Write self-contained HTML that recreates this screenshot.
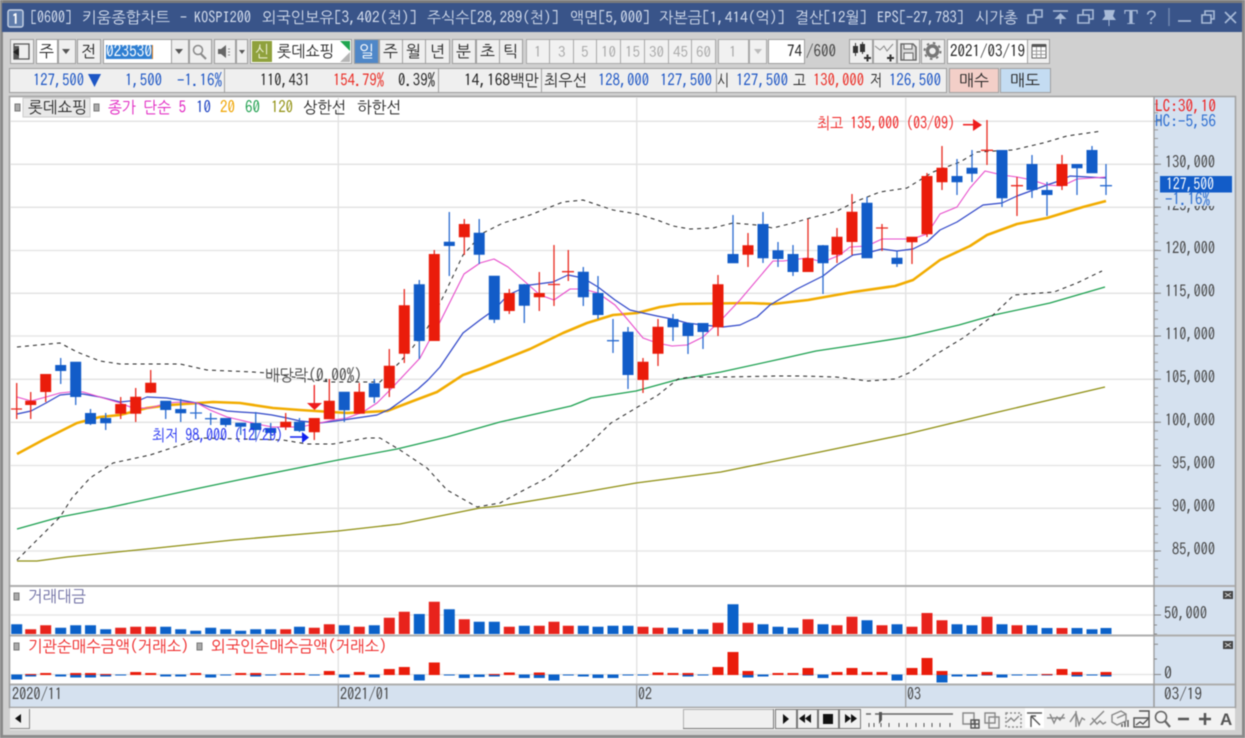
<!DOCTYPE html>
<html lang="ko"><head><meta charset="utf-8"><title>키움종합차트</title>
<style>
html,body{margin:0;padding:0;background:#d0d0d0;width:1245px;height:738px;overflow:hidden}
svg{display:block;filter:blur(.45px)}
text{font-family:"IPAGothic","NanumGothic","Noto Sans CJK KR",sans-serif;font-size:16px;fill:#222}
.b{fill:#efefef;stroke:#9e9e9e}
.w{fill:#fff;stroke:#9e9e9e}
.i{fill:#f1f1f1;stroke:#a8a8a8}
.d{fill:#aaa;font-size:15px}
.u{fill:#1c55c4}.r{fill:#ea2a22}
.ti{fill:#d5deee;font-size:15.5px}
.ax{fill:#444}
.n{fill:none}
</style></head><body>
<svg width="1245" height="738" viewBox="0 0 1245 738" xmlns="http://www.w3.org/2000/svg">
<rect width="1245" height="738" fill="#d0d0d0"/>
<!-- window edges -->
<rect width="1245" height="3" fill="#7c7c7c"/>
<rect y="735" width="1245" height="3" fill="#8c8c8c"/>
<rect width="3" height="738" fill="#8a8a8a"/>
<rect x="1242" width="3" height="738" fill="#8a8a8a"/>
<!-- title bar -->
<rect x="2" y="3" width="1240" height="29" fill="#395489"/>
<rect x="8" y="10" width="15" height="17" rx="2" fill="#5f7cab" stroke="#c9d4e6" stroke-width="1.4"/>
<text x="12" y="24" style="fill:#fff;font-size:14px;font-weight:bold">1</text>
<text class="ti" x="30" y="23" textLength="42" lengthAdjust="spacingAndGlyphs">[0600]</text>
<text class="ti" x="82" y="23" textLength="88" lengthAdjust="spacingAndGlyphs">키움종합차트</text>
<text class="ti" x="180" y="23" textLength="7" lengthAdjust="spacingAndGlyphs">-</text>
<text class="ti" x="194" y="23" textLength="57" lengthAdjust="spacingAndGlyphs">KOSPI200</text>
<text class="ti" x="262" y="23" textLength="155" lengthAdjust="spacingAndGlyphs">외국인보유[3,402(천)]</text>
<text class="ti" x="427" y="23" textLength="132" lengthAdjust="spacingAndGlyphs">주식수[28,289(천)]</text>
<text class="ti" x="570" y="23" textLength="80" lengthAdjust="spacingAndGlyphs">액면[5,000]</text>
<text class="ti" x="659" y="23" textLength="126" lengthAdjust="spacingAndGlyphs">자본금[1,414(억)]</text>
<text class="ti" x="795" y="23" textLength="72" lengthAdjust="spacingAndGlyphs">결산[12월]</text>
<text class="ti" x="877" y="23" textLength="87" lengthAdjust="spacingAndGlyphs">EPS[-27,783]</text>
<text class="ti" x="975" y="23" textLength="43" lengthAdjust="spacingAndGlyphs">시가총</text>
<g fill="none" stroke="#a9bbd8" stroke-width="1.6">
<path d="M1028 15h8v8h-8zM1034 15v-5h8v7h-6"/>
<path d="M1053 11h15M1060.500 24v-8"/>
<path fill="#a9bbd8" stroke="none" d="M1060.500 13l6 6h-12z"/>
<path d="M1078 15h11v8h-11zM1083 15v-5h10v9h-4"/>
<path fill="#a9bbd8" stroke="none" d="M1104 10h11l-2 6 3 4h-6.500v6h-1v-6h-6.500l3-4z"/>
<path d="M1178 21h13"/>
<path d="M1202 15h9v8h-9zM1205 15v-4h9v8h-3"/>
<path d="M1225 12l11 11M1236 12l-11 11"/>
<path stroke="#6f86ad" d="M1169 8v18"/>
</g>
<text x="1124" y="24" style="fill:#a9bbd8;font-family:'Liberation Serif',serif;font-size:21px;font-weight:bold">T</text>
<text x="1146" y="24" style="fill:#a9bbd8;font-family:'Liberation Sans',sans-serif;font-size:19px">?</text>

<!-- toolbar -->
<rect class="b" x="10.500" y="39.500" width="23" height="24"/>
<path d="M14 44h15v15h-15z" fill="none" stroke="#555" stroke-width="1.300"/><path d="M14 46h5v13h-5z" fill="#555"/><path d="M13 52l6-4v8z" fill="#222"/>
<rect class="w" x="36.500" y="39.500" width="21" height="24"/><text x="39" y="57" textLength="15" lengthAdjust="spacingAndGlyphs">주</text>
<rect class="b" x="58.500" y="39.500" width="17" height="24"/><path d="M62 49h8l-4 5z" fill="#555"/>
<rect class="b" x="77.500" y="39.500" width="23" height="24"/><text x="81" y="57" textLength="15" lengthAdjust="spacingAndGlyphs">전</text>
<rect class="w" x="103.500" y="39.500" width="68" height="24"/>
<rect x="106" y="45" width="46" height="14" fill="#2f7fd2"/><rect x="152" y="45" width="1" height="14" fill="#e08020"/>
<text x="106" y="57" textLength="46" lengthAdjust="spacingAndGlyphs" style="fill:#fff">023530</text>
<rect class="b" x="171.500" y="39.500" width="17" height="24"/><path d="M175 49h8l-4 5z" fill="#555"/>
<rect class="b" x="189.500" y="39.500" width="22" height="24"/><circle cx="198" cy="50" r="4.500" fill="none" stroke="#888" stroke-width="1.500"/><path d="M201 54l5 5" stroke="#888" stroke-width="2"/>
<rect class="b" x="214.500" y="39.500" width="21" height="24"/><path d="M218 49h3l5-4v13l-5-4h-3z" fill="#666"/><path d="M228 49h2M228 52h2M228 55h2" stroke="#888"/>
<rect class="b" x="236.500" y="39.500" width="11" height="24"/><path d="M239 50h6l-3 4z" fill="#555"/>
<rect class="w" x="250.500" y="39.500" width="101" height="24"/>
<rect x="252" y="41" width="20" height="21" fill="#8fa13c"/><text x="255" y="57" textLength="14" lengthAdjust="spacingAndGlyphs" style="fill:#eef2d8">신</text>
<text x="277" y="57" textLength="57" lengthAdjust="spacingAndGlyphs">롯데쇼핑</text>
<path d="M340 41h10v10z" fill="#1fa54f"/><path d="M350 52v10h-10z" fill="#b5b5b5"/>
<rect x="354.500" y="39.500" width="24" height="24" fill="#4f87c8" stroke="#9e9e9e"/><text x="359" y="57" textLength="15" lengthAdjust="spacingAndGlyphs" style="fill:#fff">일</text>
<rect class="b" x="379.500" y="39.500" width="23" height="24"/><text x="383" y="57" textLength="15" lengthAdjust="spacingAndGlyphs">주</text>
<rect class="b" x="402.500" y="39.500" width="23" height="24"/><text x="406" y="57" textLength="15" lengthAdjust="spacingAndGlyphs">월</text>
<rect class="b" x="425.500" y="39.500" width="24" height="24"/><text x="430" y="57" textLength="15" lengthAdjust="spacingAndGlyphs">년</text>
<rect class="b" x="452.500" y="39.500" width="23" height="24"/><text x="456" y="57" textLength="15" lengthAdjust="spacingAndGlyphs">분</text>
<rect class="b" x="476.500" y="39.500" width="23" height="24"/><text x="480" y="57" textLength="15" lengthAdjust="spacingAndGlyphs">초</text>
<rect class="b" x="499.500" y="39.500" width="23" height="24"/><text x="503" y="57" textLength="15" lengthAdjust="spacingAndGlyphs">틱</text>
<rect class="i" x="526.500" y="39.500" width="23" height="24"/><text class="d" x="534" y="57">1</text>
<rect class="i" x="549.500" y="39.500" width="24" height="24"/><text class="d" x="558" y="57">3</text>
<rect class="i" x="573.500" y="39.500" width="23" height="24"/><text class="d" x="581" y="57">5</text>
<rect class="i" x="596.500" y="39.500" width="24" height="24"/><text class="d" x="601" y="57">10</text>
<rect class="i" x="620.500" y="39.500" width="24" height="24"/><text class="d" x="625" y="57">15</text>
<rect class="i" x="644.500" y="39.500" width="24" height="24"/><text class="d" x="649" y="57">30</text>
<rect class="i" x="668.500" y="39.500" width="23" height="24"/><text class="d" x="673" y="57">45</text>
<rect class="i" x="691.500" y="39.500" width="24" height="24"/><text class="d" x="696" y="57">60</text>
<rect class="i" x="718.500" y="39.500" width="30" height="24"/><text class="d" x="729" y="57">1</text>
<rect class="i" x="749.500" y="39.500" width="17" height="24"/><path d="M754 49h8l-4 5z" fill="#bbb"/>
<rect class="w" x="768.500" y="39.500" width="36" height="24"/><text x="787" y="57" textLength="15" lengthAdjust="spacingAndGlyphs">74</text>
<text x="806" y="57" textLength="30" lengthAdjust="spacingAndGlyphs" style="fill:#444">/600</text>
<rect class="b" x="849.500" y="39.500" width="23" height="24"/><path d="M853 46h5v7h-5zM860 44h5v8h-5z" fill="#333"/><path d="M855.500 43v13M862.500 42v12" stroke="#333"/><path d="M864 58h7M867.500 54.500v7" stroke="#333" stroke-width="2"/>
<rect class="b" x="873.500" y="39.500" width="23" height="24"/><path d="M875 46l5 4 4-4 3 5 6-7" fill="none" stroke="#888"/><path d="M887 58h7M890.500 54.500v7" stroke="#333" stroke-width="2"/>
<rect class="b" x="897.500" y="39.500" width="22" height="24"/><path d="M901 44h12l3 3v13h-15z" fill="#d8d8d8" stroke="#666" stroke-width="1.500"/><path d="M904 44h8v5h-8zM904 53h9v7h-9z" fill="#eee" stroke="#666"/>
<rect class="b" x="921.500" y="39.500" width="23" height="24"/><circle cx="932.500" cy="51" r="5" fill="none" stroke="#777" stroke-width="3.500"/><circle cx="932.500" cy="51" r="8" fill="none" stroke="#777" stroke-width="2" stroke-dasharray="2.500 3.800"/>
<rect class="w" x="947.500" y="39.500" width="80" height="24"/><text x="950" y="57" textLength="75" lengthAdjust="spacingAndGlyphs">2021/03/19</text>
<rect class="b" x="1027.500" y="39.500" width="22" height="24"/><path d="M1032 45h14v13h-14z" fill="#fff" stroke="#666"/><path d="M1032 45.500h14" stroke="#555" stroke-width="3"/><path d="M1032 51h14M1032 54.500h14M1036.500 47v11M1041 47v11" stroke="#999"/>

<!-- info row -->
<rect class="b" x="9.500" y="68.500" width="215" height="24"/>
<rect class="b" x="224.500" y="68.500" width="214" height="24"/>
<rect class="b" x="438.500" y="68.500" width="103" height="24"/>
<rect class="b" x="541.500" y="68.500" width="175" height="24"/>
<rect class="b" x="716.500" y="68.500" width="230" height="24"/>
<text class="u" x="33" y="86" textLength="51" lengthAdjust="spacingAndGlyphs">127,500</text>
<path d="M88 74h13l-6.500 13z" fill="#1c55c4"/>
<text class="u" x="125" y="86" textLength="37" lengthAdjust="spacingAndGlyphs">1,500</text>
<text class="u" x="177" y="86" textLength="45" lengthAdjust="spacingAndGlyphs">-1.16%</text>
<text x="260" y="86" textLength="50" lengthAdjust="spacingAndGlyphs">110,431</text>
<text class="r" x="333" y="86" textLength="51" lengthAdjust="spacingAndGlyphs">154.79%</text>
<text x="398" y="86" textLength="37" lengthAdjust="spacingAndGlyphs">0.39%</text>
<text x="464" y="86" textLength="75" lengthAdjust="spacingAndGlyphs">14,168백만</text>
<text x="544" y="86" textLength="43" lengthAdjust="spacingAndGlyphs">최우선</text>
<text class="u" x="598" y="86" textLength="51" lengthAdjust="spacingAndGlyphs">128,000</text>
<text class="u" x="660" y="86" textLength="52" lengthAdjust="spacingAndGlyphs">127,500</text>
<text x="717" y="86" textLength="12" lengthAdjust="spacingAndGlyphs">시</text>
<text class="u" x="736" y="86" textLength="52" lengthAdjust="spacingAndGlyphs">127,500</text>
<text x="793" y="86" textLength="13" lengthAdjust="spacingAndGlyphs">고</text>
<text class="r" x="813" y="86" textLength="51" lengthAdjust="spacingAndGlyphs">130,000</text>
<text x="870" y="86" textLength="12" lengthAdjust="spacingAndGlyphs">저</text>
<text class="u" x="889" y="86" textLength="52" lengthAdjust="spacingAndGlyphs">126,500</text>
<rect x="949.500" y="68.500" width="49" height="24" fill="#f3cfc8" stroke="#a0a0a0"/><text x="959" y="86" textLength="30" lengthAdjust="spacingAndGlyphs">매수</text>
<rect x="1000.500" y="68.500" width="50" height="24" fill="#c4dcf2" stroke="#a0a0a0"/><text x="1010" y="86" textLength="30" lengthAdjust="spacingAndGlyphs">매도</text>

<!-- chart panes -->
<rect x="10" y="97" width="1144" height="588" fill="#fff"/>
<rect x="1154" y="97" width="81" height="610" fill="#d5e1ef"/>
<rect x="10" y="685" width="1144" height="22" fill="#d5e1ef"/>
<path d="M9.500 96.500H1235.500V707.500H9.500Z" fill="none" stroke="#a0a0a0" stroke-width="1.500"/>
<!-- grid -->
<g stroke="#e2e2e2" stroke-width="1.300" fill="none">
<path d="M10 121.300H1154M10 164.300H1154M10 207.300H1154M10 250.500H1154M10 293.300H1154M10 336H1154M10 379.300H1154M10 422.300H1154M10 465.500H1154M10 508.300H1154M10 551H1154M10 615H1154M10 674.500H1154"/>
<path d="M338.300 97V685M636.700 97V685M905.700 97V685"/>
</g>
<path d="M10 586H1235M10 635.500H1235M10 684.500H1235" stroke="#aeaeae" stroke-width="2" fill="none"/>
<path d="M1154 97V707" stroke="#999" stroke-width="1.300"/>
<path d="M338.300 685V707M636.700 685V707M905.700 685V707M1154 685V707" stroke="#999" stroke-width="1.200"/>
<!-- axis ticks -->
<path d="M1156 103.600V585" stroke="#999" stroke-width="4" stroke-dasharray="1 7.600" fill="none"/>
<path d="M1154 121.300h7M1154 164.300h7M1154 207.300h7M1154 250.500h7M1154 293.300h7M1154 336h7M1154 379.300h7M1154 422.300h7M1154 465.500h7M1154 508.300h7M1154 551h7M1154 615h7M1154 674.500h7M1154 605.700h3M1154 625h3M1154 634h3M1154 644.300h4M1154 659h3" stroke="#888" fill="none"/>
<!-- indicator lines -->
<g fill="none" stroke-linejoin="round">
<polyline stroke="#8f8f12" stroke-width="1.300" points="17,561 37,561 67,557 157,548 233,540 338,531 400,524 480,508 500,506 579,493 636,483 721,472 820,452 907,434 994,413 1105,387"/>
<polyline stroke="#1ca050" stroke-width="1.300" points="17,529 60,517 107,508 200,488 243,479 338,460 397,449 447,437 500,422 540,413 571,406 591,398 636,391 676,380 721,372 785,358 816,351 856,345 907,337 959,325 994,315 1050,303 1105,287"/>
<polyline stroke="#222" stroke-width="1" stroke-dasharray="4 4" points="17,347 60,343 77,352 100,361 120,364 180,364 207,370 253,372 267,373 300,378 330,382 360,382 380,382 400,362 413,347 428,327 445,293 463,255 483,233 503,223 530,215 563,202 583,200 613,210 637,214 657,220 673,226 690,229 713,228 733,223 757,225 773,228 793,223 810,218 823,215 837,211 857,201 880,192 907,188 933,172 960,162 977,152 1013,150 1043,143 1067,136 1102,131"/>
<polyline stroke="#222" stroke-width="1" stroke-dasharray="4 4" points="17,560 60,517 72,498 90,478 113,463 150,455 187,443 200,438 283,440 307,444 333,444 367,438 380,438 400,450 427,468 447,490 477,507 500,503 524,490 549,477 585,448 611,423 636,408 658,395 678,379 690,377 725,377 777,376 800,376 836,377 868,381 895,379 911,372 935,355 963,338 990,318 1014,295 1054,292 1077,283 1102,271"/>
<polyline stroke="#f2ac00" stroke-width="2.600" points="17,454 43,440 77,423 100,417 120,415 147,408 170,405 213,402 240,403 273,408 300,410 347,413 387,411 413,401 437,392 463,375 480,369 530,349 563,333 587,323 613,315 637,313 660,307 680,304 749,303 773,304 808,300 853,292 895,286 913,280 940,260 970,246 987,235 1017,224 1047,218 1083,207 1106,201"/>
<polyline stroke="#2e45c8" stroke-width="1.200" points="17,414 31,411 46,403 60,395 70,394 83,394 100,397 120,402 140,400 147,397 167,398 180,400 197,403 210,407 227,411 240,412 257,413 272,415 287,418 300,421 320,423 343,420 377,415 390,409 418,389 428,380 440,367 463,333 480,320 494,310 508,295 530,285 553,282 568,275 583,278 598,287 615,300 630,310 643,313 657,316 672,319 687,323 703,325 723,327 740,325 757,317 770,305 797,289 823,276 837,265 853,255 867,253 882,249 897,251 913,249 927,242 940,230 957,222 983,205 1002,203 1017,196 1047,185 1062,180 1070,176 1106,178"/>
<polyline stroke="#e74ccb" stroke-width="1.100" points="17,397 31,401 46,397 60,393 70,392 83,392 100,397 120,403 133,408 150,408 167,403 180,402 197,403 210,410 227,417 240,420 257,424 272,427 300,427 320,423 333,420 347,418 363,412 377,403 390,390 420,358 428,343 440,322 464,274 480,263 494,259 508,267 523,280 540,295 554,300 570,289 583,289 598,293 615,305 628,320 643,338 657,343 672,346 687,345 703,337 723,318 740,300 773,261 783,261 807,258 823,262 840,255 850,247 867,246 882,239 912,239 927,234 940,214 957,207 970,188 985,171 1002,175 1017,177 1032,180 1047,185 1062,186 1077,179 1092,178 1106,177"/>
</g>
<!-- red wicks -->
<path fill="none" stroke="#e92a20" stroke-width="1.300" d="M16.700 383V419M11 409h11M30.700 392V419M45.700 374V402M120.700 397V419M135.700 388V422M150.700 370V393M285.700 413V430M314.300 418V440M329.300 379V419M359.300 383V414M389.300 349V397M404.300 289V363M434.300 250V341M464.300 219V255M509.300 289V314M539.300 272V311M554 245V306M548 284.500h12M568.300 250V281M562 271.700h12M643 358V393M658 319V366M718 275V336M748 233V267M808 219V272M837 228V263M852 194V255M882 224V251M876 228h12M912 237V264M927 173V237M942 146V190M987 120V165M981 150.300h12M1017 177V216M1011 185.700h12M1062 155V190"/>
<!-- blue wicks -->
<path fill="none" stroke="#2a6cd0" stroke-width="1.300" d="M60.700 358V384M75.700 362V405M90.500 409V425M105.700 413V430M165.700 401V419M180.700 399V422M195.700 403V419M190 413h12M210.700 413V425M205 418.700h12M225.700 418V427M240.700 423V435M255.700 412V440M270.700 423V438M299.500 418V432M344.300 392V422M374.300 379V403M419.300 280V359M449.300 212V276M479.200 219V264M494.300 276V323M524.300 284V323M583.300 267V306M598 276V319M613 319V353M607 340.700h12M628 327V389M673 314V341M688 323V354M703 323V349M733 215V263M763 212V263M778 242V267M793 245V276M823 245V294M867 197V258M897 251V267M957 159V195M972 150V182M1002 150V207M1032 155V198M1047 182V216M1077 164V195M1092 146V173M1106 164V195M1100 185.700h12"/>
<!-- red bodies -->
<path fill="none" stroke="#ea1c0b" stroke-width="11" d="M30.700 400.700V405M45.700 374V392M120.700 404V413.700M135.700 396.700V413.700M150.700 382.700V392.700M285.700 421.700V427.300M314.300 418V432.300M329.300 400.700V419.300M359.300 391.700V413.700M389.300 365.700V388.300M404.300 305.300V353.700M434.300 254V341M464.300 224V237.300M509.300 293V311M539.300 293V297.300M643 361.700V380M658 326.700V353.700M718 284.300V327.300M748 245.300V254.700M808 258V272M837 236.700V254.700M852 211.700V242M912 236.700V242.300M927 176V234.300M942 167.700V182.300M1062 164V186"/>
<!-- blue bodies -->
<path fill="none" stroke="#125cc8" stroke-width="11" d="M60.700 365V371M75.700 361.700V397M90.500 413V424M105.700 418V423.300M165.700 400.700V410M180.700 409V413.300M225.700 418V425M240.700 422.700V426.700M255.700 423V430M270.700 428V433M299.500 421.700V431M344.300 391.700V410.300M374.300 383.300V397.300M419.300 284.300V341M449.300 241.700V246M479.200 232.700V254.700M494.300 275.700V319.700M524.300 284.300V305.700M583.300 271.700V297.300M598 293V315M628 331.700V375M673 319V327.300M688 323V336M703 323V332M733 254V263.300M763 224V258.300M778 250.300V259M793 254V272M823 245.300V263.300M867 202.700V258.300M897 257.700V264M957 176V182.300M972 167.700V173.700M1002 150V198.300M1032 164V190M1047 190V195M1077 164V168.300M1092 150V173.300"/>
<!-- volume pane 1 -->
<path fill="none" stroke="#e8231c" stroke-width="11" d="M30.700 629.300V634M45.700 625.300V634M120.700 627.700V634M135.700 626.700V634M150.700 626.700V634M285.700 629.300V634M314.300 627.700V634M329.300 624.300V634M359.300 626.700V634M389.300 617.700V634M404.300 611.700V634M434.300 601.700V634M464.300 619.300V634M509.300 626.700V634M539.300 625.700V634M554 621.700V634M568.300 625.700V634M643 626.700V634M658 627.700V634M718 622.700V634M748 622.700V634M808 619.300V634M837 625.300V634M852 616.700V634M882 625.300V634M912 626.700V634M927 613V634M942 620.300V634M987 616.700V634M1017 625.300V634M1062 628V634"/>
<path fill="none" stroke="#0b61c9" stroke-width="11" d="M16.700 624.300V634M60.700 627.700V634M75.700 625.300V634M90.500 625.300V634M105.700 629.300V634M165.700 626.700V634M180.700 629.300V634M195.700 630.700V634M210.700 627.700V634M225.700 629.300V634M240.700 630.700V634M255.700 629.300V634M270.700 629.300V634M299.500 626.700V634M344.300 625.300V634M374.300 625.300V634M419.300 614V634M449.300 609.300V634M479.200 621.700V634M494.300 621.700V634M524.300 625.700V634M583.300 625.700V634M598 626.700V634M613 625.700V634M628 625.700V634M673 627.700V634M688 629.300V634M703 629.300V634M733 604.300V634M763 624.300V634M778 626.700V634M793 627.700V634M823 624.300V634M867 620.300V634M897 624.300V634M957 624.300V634M972 625.300V634M1002 624.300V634M1032 625.300V634M1047 628V634M1077 628V634M1092 629.300V634M1106 628V634"/>
<!-- pane 2 -->
<path fill="none" stroke="#0b61c9" stroke-width="11" d="M16.700 674.500v5M30.700 674.500v2M60.700 674.500v2M75.700 674.500v3M90.500 674.500v3M105.700 674.500v2M120.700 674.500v1M165.700 674.500v2M180.700 674.500v2M210.700 674.500v3M225.700 674.500v1M255.700 674.500v2M270.700 674.500v1M314.300 674.500v1M344.300 674.500v3M374.300 674.500v3M419.300 674.500v6M449.300 674.500v1M464.300 674.500v3.500M479.200 674.500v2.500M494.300 674.500v2M524.300 674.500v3.500M539.300 674.500v3.500M554 674.500v6M568.300 674.500v1M583.300 674.500v2M598 674.500v3.500M613 674.500v3.500M628 674.500v1M643 674.500v1M688 674.500v2M703 674.500v1M748 674.500v3M763 674.500v2M808 674.500v1M823 674.500v3.500M897 674.500v6M942 674.500v8M957 674.500v2M972 674.500v2M987 674.500v1M1002 674.500v3M1017 674.500v1M1032 674.500v1M1047 674.500v1M1077 674.500v2M1092 674.500v1M1106 674.500v2"/>
<path fill="none" stroke="#ea1c0b" stroke-width="11" d="M30.700 675v-1M45.700 675v-2M75.700 675v-2M90.500 675v-2M105.700 675v-1M135.700 675v-3M150.700 675v-2M195.700 675v-2M240.700 675v-2M255.700 675v-2M285.700 675v-2M299.500 675v-2M329.300 675v-4M359.300 675v-3M389.300 675v-6M404.300 675v-8M434.300 675v-12.500M494.300 675v-1M509.300 675v-2.500M539.300 675v-2.500M658 675v-2.500M673 675v-2M688 675v-2M718 675v-8M733 675v-23M748 675v-4M778 675v-2M793 675v-2M808 675v-7M837 675v-3M852 675v-7M867 675v-3M882 675v-3M912 675v-7M927 675v-17M942 675v-4M987 675v-3M1047 675v-1M1062 675v-6M1077 675v-3M1106 675v-3"/>

<!-- pane labels -->
<rect x="15" y="104" width="5" height="7" fill="#aaa" stroke="#777"/>
<rect x="23" y="98" width="67" height="19" fill="#e8e8e8" stroke="#ccc"/>
<text x="28" y="113" textLength="59" lengthAdjust="spacingAndGlyphs">롯데쇼핑</text>
<rect x="94" y="104" width="5" height="7" fill="#aaa" stroke="#777"/>
<text x="108" y="113" textLength="78" lengthAdjust="spacingAndGlyphs" style="fill:#e020c0">종가 단순 5</text>
<text x="196" y="113" textLength="15" lengthAdjust="spacingAndGlyphs" style="fill:#1a3fc0">10</text>
<text x="220" y="113" textLength="15" lengthAdjust="spacingAndGlyphs" style="fill:#f0a400">20</text>
<text x="245" y="113" textLength="15" lengthAdjust="spacingAndGlyphs" style="fill:#21a050">60</text>
<text x="271" y="113" textLength="22" lengthAdjust="spacingAndGlyphs" style="fill:#909010">120</text>
<text x="303" y="113" textLength="43" lengthAdjust="spacingAndGlyphs">상한선</text>
<text x="357" y="113" textLength="44" lengthAdjust="spacingAndGlyphs">하한선</text>
<!-- annotations -->
<text x="817" y="129" textLength="138" lengthAdjust="spacingAndGlyphs" style="fill:#ee1c1c">최고 135,000 (03/09)</text>
<path d="M963 124.700h12" stroke="#ee1c1c" stroke-width="1.500"/><path d="M973 119l9 6-9 6z" fill="#ee1c1c"/>
<text x="152" y="441" textLength="131" lengthAdjust="spacingAndGlyphs" style="fill:#2030f0">최저 98,000 (12/29)</text>
<path d="M290 437h14" stroke="#1020f0" stroke-width="1.500"/><path d="M302 432l7 5.500-7 5.500z" fill="#1020f0"/>
<text x="265" y="381" textLength="97" lengthAdjust="spacingAndGlyphs" style="fill:#444">배당락(0.00%)</text>
<path d="M314.300 385V403" stroke="#ee1c1c" stroke-width="1.300"/><path d="M307 403h15l-7.500 7z" fill="#ee1c1c"/>
<!-- right axis -->
<text x="1155" y="112" textLength="61" lengthAdjust="spacingAndGlyphs" style="fill:#ee2020">LC:30,10</text>
<text x="1155" y="127" textLength="61" lengthAdjust="spacingAndGlyphs" style="fill:#2a6cd0">HC:-5,56</text>
<text class="ax" x="1165" y="168" textLength="50" lengthAdjust="spacingAndGlyphs">130,000</text>
<text class="ax" x="1165" y="211" textLength="50" lengthAdjust="spacingAndGlyphs">125,000</text>
<text class="ax" x="1165" y="254" textLength="50" lengthAdjust="spacingAndGlyphs">120,000</text>
<text class="ax" x="1165" y="297" textLength="50" lengthAdjust="spacingAndGlyphs">115,000</text>
<text class="ax" x="1165" y="340" textLength="50" lengthAdjust="spacingAndGlyphs">110,000</text>
<text class="ax" x="1165" y="383" textLength="50" lengthAdjust="spacingAndGlyphs">105,000</text>
<text class="ax" x="1165" y="426" textLength="50" lengthAdjust="spacingAndGlyphs">100,000</text>
<text class="ax" x="1172" y="469" textLength="43" lengthAdjust="spacingAndGlyphs">95,000</text>
<text class="ax" x="1172" y="512" textLength="43" lengthAdjust="spacingAndGlyphs">90,000</text>
<text class="ax" x="1172" y="555" textLength="43" lengthAdjust="spacingAndGlyphs">85,000</text>
<rect x="1160" y="192" width="72" height="14" fill="#d5e1ef"/>
<rect x="1160" y="176" width="72" height="16.500" fill="#125cc8"/>
<text x="1166" y="190" textLength="48" lengthAdjust="spacingAndGlyphs" style="fill:#fff">127,500</text>
<text x="1165" y="205" textLength="45" lengthAdjust="spacingAndGlyphs" style="fill:#2a6cd0">-1.16%</text>
<!-- lower pane labels -->
<rect x="14" y="593" width="5" height="7" fill="#aaa" stroke="#777"/>
<text x="28" y="602" textLength="58" lengthAdjust="spacingAndGlyphs" style="fill:#6a6aa0">거래대금</text>
<rect x="14" y="643" width="5" height="7" fill="#aaa" stroke="#777"/>
<text x="28" y="652" textLength="161" lengthAdjust="spacingAndGlyphs" style="fill:#ee2020">기관순매수금액(거래소)</text>
<rect x="197" y="643" width="5" height="7" fill="#aaa" stroke="#777"/>
<text x="211" y="652" textLength="176" lengthAdjust="spacingAndGlyphs" style="fill:#ee2020">외국인순매수금액(거래소)</text>
<text class="ax" x="1164" y="619" textLength="43" lengthAdjust="spacingAndGlyphs">50,000</text>
<text class="ax" x="1164" y="679" textLength="8" lengthAdjust="spacingAndGlyphs">0</text>
<rect x="1223" y="591" width="10" height="8" fill="#444"/><path d="M1225 593l6 4M1231 593l-6 4" stroke="#ddd"/>
<rect x="1223" y="641" width="10" height="8" fill="#444"/><path d="M1225 643l6 4M1231 643l-6 4" stroke="#ddd"/>
<text class="ax" x="12" y="700" textLength="50" lengthAdjust="spacingAndGlyphs">2020/11</text>
<text class="ax" x="340" y="700" textLength="50" lengthAdjust="spacingAndGlyphs">2021/01</text>
<text class="ax" x="638" y="700" textLength="14" lengthAdjust="spacingAndGlyphs">02</text>
<text class="ax" x="907" y="700" textLength="14" lengthAdjust="spacingAndGlyphs">03</text>
<text class="ax" x="1164" y="700" textLength="38" lengthAdjust="spacingAndGlyphs">03/19</text>
<!-- bottom bar -->
<rect x="10" y="708" width="1225" height="22" fill="#f2f2f2"/>
<rect x="10" y="709" width="20" height="19" fill="#f0f0f0"/><path d="M10 728.500h20M29.500 709v20" stroke="#888"/><path d="M15 718.500l6-4.500v9z" fill="#111"/>
<rect x="683.500" y="709.500" width="90" height="19" fill="#f0f0f0" stroke="#b0b0b0"/><path d="M683 728.500h91M773.500 709v20" stroke="#777"/>
<g stroke="#777"><rect x="775.500" y="709.500" width="21" height="19" fill="#f0f0f0"/><rect x="797.500" y="709.500" width="20" height="19" fill="#f0f0f0"/><rect x="818.500" y="709.500" width="20" height="19" fill="#f0f0f0"/><rect x="839.500" y="709.500" width="21" height="19" fill="#f0f0f0"/></g>
<path d="M783 714l6 5-6 5zM811 714l-6 4.500 6 4.500zM805 714l-6 4.500 6 4.500zM823 714h10v10h-10zM845 714l6 4.500-6 4.500zM851 714l6 4.500-6 4.500z" fill="#111"/>
<path d="M866 714h5M875 714h78" stroke="#666" stroke-width="1.500"/><path d="M879 712h3v8l-3 4z" fill="#555"/>
<path d="M869 725v4M874 725v4M881 725v4M889 725v4M899 725v4M907 725v4M916 725v4M924 725v4M932 725v4M940 725v4M950 725v4" stroke="#555" transform="translate(0,-2)"/>
<g fill="none" stroke="#888" stroke-width="1.400">
<path d="M963 713h11v11h-11z"/><path d="M971 720h8v8h-8zM975 720v8M971 724h8" stroke="#555"/>
<path d="M985 713h10v10h-10zM989 717h10v11h-10z"/>
<path d="M1006 713h15v14h-15z" stroke-dasharray="2 2"/><path d="M1007 722l4-4 3 3 5-5"/>
<rect x="1025" y="708" width="19" height="20" fill="#fff" stroke="none"/>
<path d="M1027 713h15" stroke="#555"/><path d="M1031 727v-11M1031 716l9 9M1031 716h5M1031 716v5" stroke="#555"/>
<path d="M1047 718h18M1050 714l4 9 3-6 3 3 4-6"/>
<path d="M1076 711v16M1070 722l6-9 3 12 3-7 3 2"/>
<path d="M1090 725l14-14M1092 718l5 6 3-3 3 3 3-2"/>
<path d="M1112 715l9-4 5 3v7l-9 4-5-3zM1117 718l9-4"/><path d="M1122 727v-3M1125 727v-5M1128 727v-7" stroke="#555"/>
<path d="M1134 718h15v9h-15zM1139 711h10v7M1136 725l4-3 3 2 5-5" stroke="#555"/>
<circle cx="1161" cy="717" r="5.500" stroke="#666" stroke-width="1.600"/><path d="M1165 721l5 6" stroke="#666" stroke-width="2.200"/>
</g>
<path d="M1178 719h11M1199 719h12M1205 713v12" stroke="#555" stroke-width="2.500" fill="none"/>
<text x="1220" y="725" style="fill:#555;font-family:'Liberation Sans',sans-serif;font-size:17px;font-weight:bold">A</text>
</svg>
</body></html>
